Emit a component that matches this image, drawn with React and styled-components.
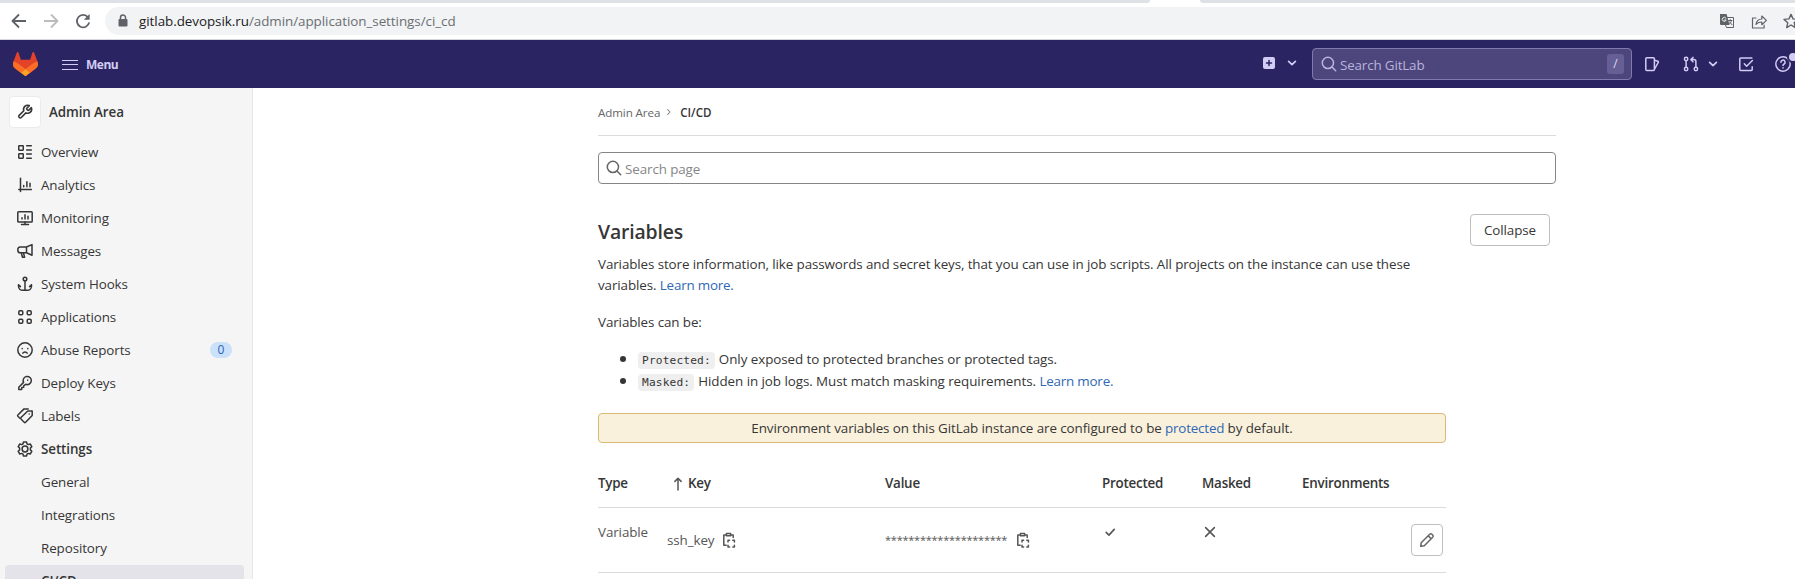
import React from 'react';
import styled, { createGlobalStyle, css } from 'styled-components';

const GlobalStyle = createGlobalStyle`
  *, *::before, *::after { box-sizing: border-box; }
  body {
    margin: 0;
    overflow: hidden;
    background: #fff;
    color: #363636;
    font-family: "Open Sans", "Noto Sans", sans-serif;
    font-size: 13.4px;
    letter-spacing: -0.1px;
    line-height: 21px;
  }
`;

/* ---------- icons ---------- */

const Svg = styled.svg`
  display: block;
  flex: none;
  overflow: visible;
  width: ${(p) => p.$size || 16}px;
  height: ${(p) => p.$size || 16}px;
  fill: none;
  stroke: currentColor;
  stroke-width: ${(p) => p.$weight || 1.5};
  stroke-linecap: ${(p) => p.$cap || 'round'};
  stroke-linejoin: round;
`;

const icons = {
  wrench: (
    <path d="M9.8 4.2a.8.8 0 0 0 0 1l1 1a.8.8 0 0 0 1 0l2.6-2.5a4.1 4.1 0 0 1-5.5 5.2l-4.6 4.6a1.5 1.5 0 0 1-2.1 0l0 0a1.5 1.5 0 0 1 0-2.1l4.6-4.6A4.1 4.1 0 0 1 12.3 1.6z" />
  ),
  overview: (
    <>
      <rect x="1.75" y="1.75" width="4.5" height="4.5" rx=".4" />
      <rect x="1.75" y="9.75" width="4.5" height="4.5" rx=".4" />
      <path d="M9.7 1.75h4.6M9.7 6h4.6M9.7 10h4.6M9.7 14.25h4.6" />
    </>
  ),
  analytics: <path d="M3.5 1.2v13.3M1.8 12.6h12.6M6.7 8.6v1.2M9.9 4.7v5.1M13 6.2v3.6" />,
  monitoring: (
    <>
      <rect x=".8" y="1.8" width="14.4" height="10.2" rx=".8" />
      <path d="M8 12v2.3M4.5 14.4h7M5 7.8v1.2M8 4.8V9M11 6.3V9" />
    </>
  ),
  messages: (
    <path d="M15 1.6v10.6L9.5 9.8V4zM9.5 4H3.2a2.4 2.9 0 0 0 0 5.8h6.3M4.2 9.8l1.3 4.4h2.1L6.4 9.8" />
  ),
  hooks: (
    <>
      <circle cx="8" cy="3" r="1.8" />
      <path d="M8 5v9.3M1.5 8.8v1.4a4.2 4.2 0 0 0 4.2 4.1h4.6a4.2 4.2 0 0 0 4.2-4.1V8.8M1.5 8.8l2 1.8M14.5 8.8l-2 1.8" />
    </>
  ),
  applications: (
    <>
      <rect x="1.8" y="1.8" width="4" height="4" rx="1.2" />
      <rect x="10.2" y="1.8" width="4" height="4" rx="1.2" />
      <rect x="1.8" y="10.2" width="4" height="4" rx="1.2" />
      <rect x="10.2" y="10.2" width="4" height="4" rx="1.2" />
    </>
  ),
  abuse: (
    <>
      <circle cx="8" cy="8" r="7.2" />
      <path d="M5.8 11.2a2.6 2.6 0 0 1 4.4 0M5.2 6.6v.2M10.8 6.6v.2" />
    </>
  ),
  key: (
    <>
      <path d="M6.6 7.4 1.8 12.2v2.2h2.9l.1-1.9 1.8-.2.2-1.6 1.9-1.4a4.1 4.1 0 1 0-2.1-1.9z" />
      <path d="M10.7 5.1v.1" />
    </>
  ),
  labels: (
    <>
      <path d="M5.3 8.2 10.8 3h4.4v4.4l-6.6 6.9a1 1 0 0 1-1.4 0l-3-3a1.4 1.4 0 0 1 0-2zM12.2 6v.1" />
      <path d="M2.9 10.2.9 8.3a1 1 0 0 1 0-1.4L7 .9h4.2" />
    </>
  ),
  settings: (
    <>
      <path d="M6.5.9h3l.5 1.9 1.3.8 1.9-.6 1.6 2.6-1.4 1.4v1.9l1.4 1.4-1.6 2.7-1.9-.6-1.3.8-.5 1.9h-3L6 13.2l-1.3-.8-1.9.6-1.6-2.7 1.4-1.4V7L1.2 5.6 2.8 3l1.9.6L6 2.8z" />
      <circle cx="8" cy="8" r="2.9" />
    </>
  ),
  search: (
    <>
      <circle cx="6.9" cy="6.9" r="5.6" />
      <path d="m11 11 3.7 3.7" />
    </>
  ),
  chevronDown: <path d="m4.6 6.3 3.4 3.4 3.4-3.4" />,
  chevronRight: <path d="m6.3 4.8 3.2 3.2-3.2 3.2" />,
  issues: (
    <>
      <rect x="1.8" y="1.8" width="8.6" height="12.6" rx="1" />
      <path d="m10.6 4.3 3.3.9c.4.2.6.5.5.9l-3.8 6.9" />
    </>
  ),
  merge: (
    <>
      <circle cx="3.1" cy="3" r="1.7" />
      <circle cx="3.1" cy="13" r="1.7" />
      <circle cx="12.9" cy="13" r="1.7" />
      <path d="M3.1 4.9v6.2M12.9 11.1V5.6a2 2 0 0 0-2-2H8.3M10 1.4 7.9 3.6 10 5.7" />
    </>
  ),
  todo: (
    <>
      <path d="M13.9 2H2.7a.9.9 0 0 0-.9.9v10.6a.9.9 0 0 0 .9.9h10.6a.9.9 0 0 0 .9-.9v-2.7" />
      <path d="m6.3 7.8 2.3 2.4 5.8-5.7" />
    </>
  ),
  help: (
    <>
      <circle cx="8" cy="8" r="7.2" />
      <path d="M5.9 6.3a2.1 2.1 0 1 1 3.2 1.7c-.7.4-1.1.8-1.1 1.5M8 11.8v.1" />
    </>
  ),
  arrowUp: <path d="M8 14V2.5M4.9 5.4 8 2.3l3.1 3.1" />,
  copy: (
    <>
      <path d="M4.2 13.2H1.8V2.9h1.9M9.3 2.9h1.9v2.6" />
      <path d="M4.4 1.4h4.2v2.4H4.4z" />
      <path d="M6 10V8.3h1.6M10.8 8.3h1.6V10M12.4 13.3V15h-1.6M7.600 15H6v-1.700" />
    </>
  ),
  check: <path d="m3.6 8.4 3.2 3.2 6-6.6" />,
  close: <path d="m3 3 10 10M13 3 3 13" />,
  pencil: (
    <path d="M10.7 2.3a1.6 1.6 0 0 1 2.2 0l.8.8a1.6 1.6 0 0 1 0 2.2L5.3 13.7l-3.6.6.5-3.5zM9.3 3.9l2.9 2.9" />
  ),
  back: <path d="M15 8H2M8 1.5 1.5 8 8 14.5" />,
  forward: <path d="M1 8h13M8 1.5 14.5 8 8 14.5" />,
  reload: (
    <>
      <path d="M13 4.3A6.2 6.2 0 1 0 14.2 9.4" />
      <path d="M14.6 1v5.8H8.8z" fill="currentColor" stroke="none" />
    </>
  ),
  share: <path d="M5 5H1.5v10h11.6v-2.8M5 11.3c.6-3.7 2.6-5.2 5.8-5.3V3l4.6 4.4-4.6 4.3V9C8.3 9 6.7 9.6 5 11.3z" />,
  star: <path d="m8 1.3 2 4.6 5 .5-3.8 3.3 1.1 4.9L8 12l-4.3 2.6 1.1-4.9L1 6.4l5-.5z" />,
};

const Icon = ({ name, size, weight, cap }) => (
  <Svg viewBox="0 0 16 16" $size={size} $weight={weight} $cap={cap} aria-hidden="true">
    {icons[name]}
  </Svg>
);

const LockIcon = () => (
  <Svg viewBox="0 0 16 16" $size={16}>
    <rect x="3.5" y="6" width="9" height="7.5" rx="1" fill="currentColor" stroke="none" />
    <path d="M5.5 6V4.5a2.5 2.5 0 0 1 5 0V6" />
  </Svg>
);

const TranslateIcon = () => (
  <Svg viewBox="0 0 16 16" $size={16} $weight={1}>
    <path d="M8 4.5h6.5v10H7.5l-1-2.5" />
    <path d="M1 1h6.6l2.9 11H2a1 1 0 0 1-1-1z" fill="currentColor" stroke="none" />
    <path d="M7 5.2A2 2 0 1 0 7.2 7H5.7" stroke="#f1f3f4" />
    <path d="M9.5 7.5H13M11.3 6.6v.9M12.5 7.6c-.3 1.4-1 2.3-2 3.1M10.5 8.8l2.6 3" />
  </Svg>
);

const PlusSquareIcon = () => (
  <Svg viewBox="0 0 12 12" $size={12}>
    <rect width="12" height="12" rx="2" fill="currentColor" stroke="none" />
    <path d="M6 3.5v5M3.5 6h5" stroke="#2a2462" strokeWidth="1.5" />
  </Svg>
);

const Tanuki = styled.svg`
  display: block;
  flex: none;
  width: 25px;
  height: 24px;
`;

const Logo = () => (
  <Tanuki viewBox="0 0 25 24">
    <path d="m24.507 9.5-.034-.09L21.082.562a.896.896 0 0 0-1.694.091l-2.29 7.01H7.825L5.535.653a.898.898 0 0 0-1.694-.09L.451 9.411.416 9.5a6.297 6.297 0 0 0 2.09 7.278l.012.01.03.022 5.16 3.867 2.56 1.935 1.554 1.176a1.051 1.051 0 0 0 1.268 0l1.555-1.176 2.56-1.935 5.197-3.89.014-.01A6.297 6.297 0 0 0 24.507 9.5Z" fill="#E24329" />
    <path d="m24.507 9.5-.034-.09a11.44 11.44 0 0 0-4.56 2.051l-7.447 5.632 4.742 3.584 5.197-3.89.014-.01A6.297 6.297 0 0 0 24.507 9.5Z" fill="#FC6D26" />
    <path d="m7.707 20.677 2.56 1.935 1.555 1.176a1.051 1.051 0 0 0 1.268 0l1.555-1.176 2.56-1.935-4.743-3.584-4.755 3.584Z" fill="#FCA326" />
    <path d="M5.01 11.461a11.43 11.43 0 0 0-4.56-2.05L.416 9.5a6.297 6.297 0 0 0 2.09 7.278l.012.01.03.022 5.16 3.867 4.745-3.584-7.444-5.632Z" fill="#FC6D26" />
  </Tanuki>
);

/* ---------- browser chrome ---------- */

const Window = styled.div`
  display: flex;
  flex-direction: column;
  width: 1795px;
  height: 579px;
  overflow: hidden;
`;

const TabStrip = styled.div`
  display: flex;
  flex: none;
  justify-content: space-between;
  height: 3px;
`;

const TabStripSide = styled.div`
  width: ${(p) => p.$width}px;
  background: #dee1e6;
  border-radius: ${(p) => (p.$left ? '0 0 6px 0' : '0 0 0 6px')};
`;

const BrowserBar = styled.div`
  display: flex;
  flex: none;
  align-items: center;
  height: 37px;
  padding: 0 0 1px 11px;
  border-bottom: 1px solid #d5d6de;
`;

const NavButton = styled.span`
  width: 32px;
  color: ${(p) => (p.$disabled ? '#babcbe' : '#5f6368')};
`;

const AddressBar = styled.div`
  display: flex;
  flex: 1;
  align-items: center;
  height: 28px;
  margin: 0 -20px 0 -2px;
  padding-left: 10px;
  border-radius: 14px 0 0 14px;
  background: #f1f3f4;
  color: #5f6368;
`;

const Url = styled.span`
  flex: 1;
  margin-left: 8px;
  padding-top: 1px;
  letter-spacing: -0.04px;
  color: #6a6e73;
`;

const UrlHost = styled.span`
  color: #202124;
`;

const AddressActions = styled.span`
  display: flex;
  gap: 16px;
  width: 96px;
`;

/* ---------- GitLab top bar ---------- */

const TopBar = styled.header`
  display: flex;
  flex: none;
  align-items: center;
  height: 48px;
  padding-left: 13px;
  background: #2a2462;
  color: #d1cdf5;
`;

const MenuButton = styled.span`
  display: flex;
  align-items: center;
  gap: 8px;
  margin-left: 24px;
  padding-top: 1px;
  font-size: 12px;
  font-weight: 700;
  letter-spacing: -0.5px;
`;

const Burger = styled.span`
  display: flex;
  flex-direction: column;
  justify-content: space-between;
  width: 16px;
  height: 10px;
  border-block: 1.5px solid currentColor;

  &::before {
    content: '';
    height: 1px;
    margin: auto 0;
    background: currentColor;
  }
`;

const TopActions = styled.div`
  display: flex;
  flex: none;
  align-items: center;
  width: 532px;
  margin-left: auto;
`;

const NewMenu = styled.span`
  display: flex;
  flex: none;
  align-items: center;
  gap: 9px;
  width: 49px;
  padding-bottom: 2px;
`;

const GlobalSearch = styled.div`
  display: flex;
  flex: none;
  align-items: center;
  width: 320px;
  height: 32px;
  padding: 0 7px 0 8px;
  border: 1px solid #7e79b0;
  border-radius: 4px;
  background: #4c467c;
  color: #b9b3dd;
`;

const SearchHint = styled.span`
  flex: 1;
  margin-left: 3px;
  padding-top: 2px;
  letter-spacing: -0.15px;
`;

const Shortcut = styled.kbd`
  width: 17px;
  height: 20px;
  border-radius: 3px;
  background: #655f95;
  color: #dcd8f5;
  font: 12px/20px "Open Sans", sans-serif;
  text-align: center;
`;

const TopLinks = styled.nav`
  display: flex;
  flex: none;
  align-items: center;
  margin-left: 12px;
`;

const TopLink = styled.span`
  position: relative;
  display: flex;
  flex: none;
  gap: 6px;
  width: ${(p) => p.$width}px;
`;

const NotificationDot = styled.span`
  position: absolute;
  top: -5px;
  left: 12px;
  width: 12px;
  height: 12px;
  border: 2px solid #2a2462;
  border-radius: 50%;
  background: #d1cdf5;
`;

/* ---------- sidebar ---------- */

const Body = styled.div`
  display: flex;
  flex: 1;
  min-height: 0;
`;

const Sidebar = styled.aside`
  flex: none;
  width: 253px;
  padding-top: 8px;
  overflow: hidden;
  border-right: 1px solid #e6e6e8;
  background: #f5f5f5;
`;

const ContextHeader = styled.div`
  display: flex;
  align-items: center;
  gap: 8px;
  height: 32px;
  margin-bottom: 8px;
  padding-left: 9px;
  font-weight: 600;
`;

const Avatar = styled.span`
  display: grid;
  place-items: center;
  width: 32px;
  height: 32px;
  border: 1px solid #ebebeb;
  border-radius: 4px;
  background: #fff;
`;

const NavItem = styled.div`
  display: flex;
  align-items: center;
  height: 32px;
  margin: 0 8px 1px 5px;
  padding-left: ${(p) => (p.$sub ? 36 : 12)}px;
  border-radius: 4px;
  font-weight: ${(p) => (p.$active ? 600 : 400)};
  ${(p) => p.$selected && css`background: #e4e3ea;`}
`;

const NavLabel = styled.span`
  flex: 1;
  margin-left: ${(p) => (p.$sub ? 0 : 8)}px;
`;

const Badge = styled.span`
  width: 22px;
  height: 16px;
  margin-right: 12px;
  border-radius: 8px;
  background: #cbe0f9;
  color: #2a66b8;
  font-size: 12px;
  line-height: 16px;
  text-align: center;
`;

/* ---------- content ---------- */

const Main = styled.main`
  width: 958px;
  margin-left: 345px;
`;

const Breadcrumbs = styled.nav`
  display: flex;
  align-items: center;
  height: 48px;
  padding-top: 2px;
  border-bottom: 1px solid #dbdbdb;
  color: #666;
  font-size: 11.6px;
  letter-spacing: -0.1px;
`;

const CrumbSeparator = styled.span`
  margin: 0 5px 2px 3px;
  color: #888;
`;

const CurrentCrumb = styled.span`
  color: #363636;
  font-weight: 600;
  letter-spacing: 0;
`;

const PageSearch = styled.div`
  display: flex;
  align-items: center;
  gap: 3px;
  height: 32px;
  margin-top: 16px;
  padding-left: 7px;
  border: 1px solid #868686;
  border-radius: 4px;
  color: #666;
`;

const Placeholder = styled.span`
  padding-top: 2px;
  color: #868686;
`;

const SectionHeader = styled.div`
  display: flex;
  justify-content: space-between;
  height: 40px;
  margin-top: 30px;
  padding-right: 6px;
`;

const Heading = styled.h4`
  margin: 5px 0 0;
  font-size: 19.4px;
  font-weight: 600;
  letter-spacing: -0.15px;
  line-height: 26px;
`;

const buttonFrame = css`
  display: grid;
  flex: none;
  place-items: center;
  height: 32px;
  border: 1px solid #bfbfbf;
  border-radius: 4px;
`;

const CollapseButton = styled.span`
  ${buttonFrame}
  width: 80px;
`;

const Prose = styled.p`
  width: 848px;
  margin: ${(p) => p.$top}px 0 0;
`;

const Link = styled.a`
  color: #2f68b4;
  letter-spacing: -0.2px;
`;

const Definitions = styled.ul`
  width: 848px;
  margin: 14px 0 0;
  padding-left: 40px;
`;

const Definition = styled.li`
  height: 22px;
  line-height: 22px;
  letter-spacing: -0.06px;

  &::marker {
    font-size: 16px;
  }
`;

const Code = styled.code`
  margin-right: 4px;
  padding: 2px 4px;
  border-radius: 4px;
  background: #efefef;
  font-family: "DejaVu Sans Mono", monospace;
  font-size: 11.2px;
  letter-spacing: 0.15px;
`;

const Notice = styled.div`
  width: 848px;
  height: 30px;
  margin-top: 22px;
  border: 1px solid #d9b974;
  border-radius: 4px;
  background: #faf1dc;
  letter-spacing: -0.08px;
  line-height: 28px;
  text-align: center;
`;

const TableRow = styled.div`
  display: grid;
  grid-template-columns: 70px 217px 217px 100px 100px 109px 35px;
  width: 848px;
  height: ${(p) => p.$height}px;
  padding-top: ${(p) => p.$top}px;
  border-bottom: 1px solid #dbdbdb;
`;

const HeadCell = styled.div`
  display: flex;
  align-items: center;
  gap: 2px;
  height: 21px;
  font-weight: 600;
  letter-spacing: -0.24px;
`;

const SortArrow = styled.span`
  margin-left: 2px;
  color: #555;
`;

const Cell = styled.div`
  color: #555;
  line-height: 17px;
`;

const CopyCell = styled(Cell)`
  display: flex;
  align-items: center;
  gap: 8px;
  height: 32px;
  margin-left: -1px;
`;

const IconCell = styled(Cell)`
  padding: 1px 0 0 1px;
`;

const Masked = styled.span`
  padding: 0 1px 2px;
  font-size: 11px;
  letter-spacing: -0.24px;
`;

const EditButton = styled.span`
  ${buttonFrame}
  width: 32px;
  color: #666;
`;

const navItems = [
  { icon: 'overview', label: 'Overview' },
  { icon: 'analytics', label: 'Analytics' },
  { icon: 'monitoring', label: 'Monitoring' },
  { icon: 'messages', label: 'Messages' },
  { icon: 'hooks', label: 'System Hooks' },
  { icon: 'applications', label: 'Applications' },
  { icon: 'abuse', label: 'Abuse Reports', badge: '0' },
  { icon: 'key', label: 'Deploy Keys' },
  { icon: 'labels', label: 'Labels' },
  { icon: 'settings', label: 'Settings', active: true },
  { label: 'General' },
  { label: 'Integrations' },
  { label: 'Repository' },
  { label: 'CI/CD', active: true, selected: true },
];

export default function App() {
  return (
    <Window>
      <GlobalStyle />
      <TabStrip>
        <TabStripSide $left $width={1150} />
        <TabStripSide $width={595} />
      </TabStrip>
      <BrowserBar>
        <NavButton><Icon name="back" weight={1.8} cap="butt" /></NavButton>
        <NavButton $disabled><Icon name="forward" weight={1.8} cap="butt" /></NavButton>
        <NavButton><Icon name="reload" weight={1.8} cap="butt" /></NavButton>
        <AddressBar>
          <LockIcon />
          <Url><UrlHost>gitlab.devopsik.ru</UrlHost>/admin/application_settings/ci_cd</Url>
          <AddressActions>
            <TranslateIcon />
            <Icon name="share" weight={1.2} />
            <Icon name="star" weight={1.4} />
          </AddressActions>
        </AddressBar>
      </BrowserBar>

      <TopBar>
        <Logo />
        <MenuButton><Burger />Menu</MenuButton>
        <TopActions>
          <NewMenu>
            <PlusSquareIcon />
            <Icon name="chevronDown" weight={1.7} />
          </NewMenu>
          <GlobalSearch>
            <Icon name="search" />
            <SearchHint>Search GitLab</SearchHint>
            <Shortcut>/</Shortcut>
          </GlobalSearch>
          <TopLinks>
            <TopLink $width={39}><Icon name="issues" /></TopLink>
            <TopLink $width={55}><Icon name="merge" /><Icon name="chevronDown" weight={1.7} /></TopLink>
            <TopLink $width={37}><Icon name="todo" /></TopLink>
            <TopLink $width={24}><Icon name="help" /><NotificationDot /></TopLink>
          </TopLinks>
        </TopActions>
      </TopBar>

      <Body>
        <Sidebar>
          <ContextHeader>
            <Avatar><Icon name="wrench" weight={1.6} /></Avatar>
            Admin Area
          </ContextHeader>
          {navItems.map((item) => (
            <NavItem key={item.label} $sub={!item.icon} $active={item.active} $selected={item.selected}>
              {item.icon && <Icon name={item.icon} />}
              <NavLabel $sub={!item.icon}>{item.label}</NavLabel>
              {item.badge && <Badge>{item.badge}</Badge>}
            </NavItem>
          ))}
        </Sidebar>

        <Main>
          <Breadcrumbs>
            Admin Area
            <CrumbSeparator><Icon name="chevronRight" size={12} weight={1.4} /></CrumbSeparator>
            <CurrentCrumb>CI/CD</CurrentCrumb>
          </Breadcrumbs>
          <PageSearch>
            <Icon name="search" />
            <Placeholder>Search page</Placeholder>
          </PageSearch>

          <SectionHeader>
            <Heading>Variables</Heading>
            <CollapseButton>Collapse</CollapseButton>
          </SectionHeader>
          <Prose $top={0}>
            Variables store information, like passwords and secret keys, that you can use in job scripts.
            All projects on the instance can use these variables. <Link>Learn more.</Link>
          </Prose>
          <Prose $top={16}>Variables can be:</Prose>
          <Definitions>
            <Definition><Code>Protected:</Code>Only exposed to protected branches or protected tags.</Definition>
            <Definition>
              <Code>Masked:</Code>Hidden in job logs. Must match masking requirements. <Link>Learn more.</Link>
            </Definition>
          </Definitions>

          <Notice>
            Environment variables on this GitLab instance are configured to be <Link>protected</Link> by default.
          </Notice>

          <TableRow $height={65} $top={30}>
            <HeadCell>Type</HeadCell>
            <HeadCell>
              <SortArrow><Icon name="arrowUp" size={16} /></SortArrow>Key
            </HeadCell>
            <HeadCell>Value</HeadCell>
            <HeadCell>Protected</HeadCell>
            <HeadCell>Masked</HeadCell>
            <HeadCell>Environments</HeadCell>
          </TableRow>
          <TableRow $height={65} $top={16}>
            <Cell>Variable</Cell>
            <CopyCell>ssh_key <Icon name="copy" /></CopyCell>
            <CopyCell><Masked>*********************</Masked><Icon name="copy" /></CopyCell>
            <IconCell><Icon name="check" size={14} weight={1.8} /></IconCell>
            <IconCell><Icon name="close" size={14} weight={1.8} /></IconCell>
            <Cell />
            <EditButton><Icon name="pencil" /></EditButton>
          </TableRow>
        </Main>
      </Body>
    </Window>
  );
}
